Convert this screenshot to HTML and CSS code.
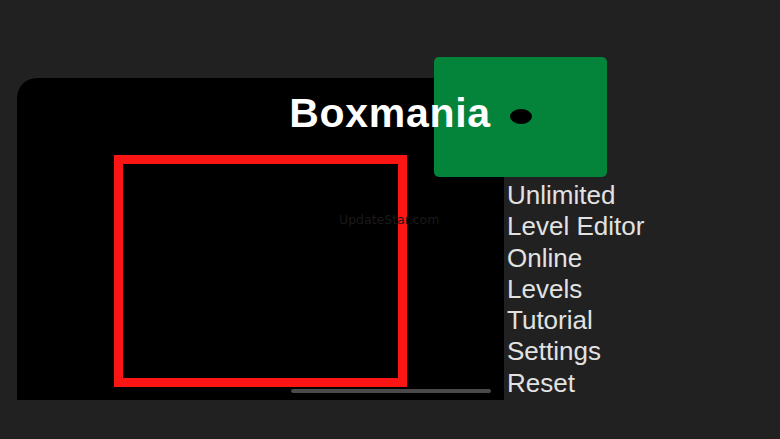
FILE: index.html
```html
<!DOCTYPE html>
<html>
<head>
<meta charset="utf-8">
<title>Boxmania</title>
<link rel="stylesheet" href="styles.css">
</head>
<body>
<div class="stage">
  <div class="panel">
    <div class="redbox"></div>
    <div class="watermark">UpdateStar.com</div>
    <div class="scrollbar"></div>
  </div>
  <ul class="menu">
    <li>Unlimited</li>
    <li>Level Editor</li>
    <li>Online</li>
    <li>Levels</li>
    <li>Tutorial</li>
    <li>Settings</li>
    <li>Reset</li>
  </ul>
  <div class="greenbox"><span class="dot"></span></div>
  <h1 class="title">Boxmania</h1>
</div>
</body>
</html>
```
FILE: styles.css
```css
html, body {
  margin: 0;
  padding: 0;
  background: #212121;
  width: 780px;
  height: 439px;
  overflow: hidden;
  font-family: "Liberation Sans", Arial, sans-serif;
}
.stage {
  position: relative;
  display: flex;
  align-items: flex-start;
  gap: 3px;
  padding: 78px 0 0 17px;
  height: 439px;
  box-sizing: border-box;
}
.panel {
  position: relative;
  width: 487px;
  height: 322px;
  background: #000;
  border-top-left-radius: 20px;
  box-sizing: border-box;
  padding: 77px 0 0 97px;
}
.redbox {
  width: 293px;
  height: 232px;
  border: 9px solid #fb1515;
  box-sizing: border-box;
}
.watermark {
  position: absolute;
  left: 322px;
  top: 134px;
  font-family: "DejaVu Sans", sans-serif;
  font-size: 12.5px;
  color: #1a1a1a;
}
.scrollbar {
  position: absolute;
  left: 274px;
  top: 311px;
  width: 200px;
  height: 4px;
  border-radius: 2px;
  background: #4a4a4a;
}
.menu {
  list-style: none;
  margin: 102px 0 0 0;
  padding: 0;
  font-size: 26px;
  line-height: 31.3px;
  color: #e2e2e2;
}
.greenbox {
  position: absolute;
  left: 434px;
  top: 57px;
  width: 173px;
  height: 120px;
  border-radius: 5px;
  background: #03843a;
}
.dot {
  position: absolute;
  left: 76px;
  top: 52px;
  width: 22px;
  height: 15px;
  border-radius: 50%;
  background: #000;
}
.title {
  position: absolute;
  left: 0;
  right: 0;
  top: 88px;
  margin: 0;
  text-align: center;
  font-size: 41px;
  letter-spacing: 0.7px;
  line-height: 50px;
  font-weight: bold;
  color: #fff;
}
```
